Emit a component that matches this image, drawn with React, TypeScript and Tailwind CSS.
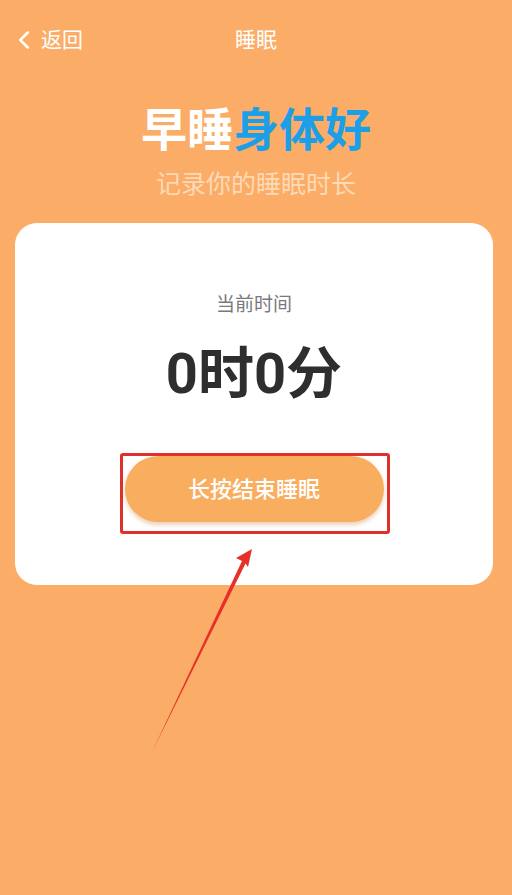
import { ChevronLeft } from "lucide-react";

export default function App() {
  return (
    <div
      className="relative w-[512px] h-[895px] overflow-hidden bg-[#fbad67]"
      style={{ fontFamily: "Roboto, 'Noto Sans CJK SC', sans-serif" }}
    >
      {/* header */}
      <div className="relative flex h-[80px] items-center justify-center">
        <div className="absolute left-[9px] top-0 flex h-full items-center gap-[2px] text-white">
          <ChevronLeft className="h-[30px] w-[30px]" strokeWidth={2} />
          <span className="text-[21px] leading-none">返回</span>
        </div>
        <span className="text-[21px] leading-none text-white">睡眠</span>
      </div>

      {/* slogan */}
      <div className="flex flex-col items-center">
        <h1 className="mt-[23px] text-[46px] font-bold leading-[54px]">
          <span className="text-white">早睡</span>
          <span className="text-[#1c9fe6]">身体好</span>
        </h1>
        <p className="mt-[14px] text-[25px] leading-[28px] text-[#fdd9b6]">记录你的睡眠时长</p>
      </div>

      {/* card */}
      <div className="ml-[15px] mt-[24px] flex h-[362px] w-[478px] flex-col items-center rounded-[22px] bg-white">
        <p className="mt-[70px] text-[19px] leading-[24px] text-[#7a7a7a]">当前时间</p>
        <p className="mt-[29px] text-[56px] font-bold leading-[56px] text-[#2e2e2e]">0时0分</p>
        <button className="mt-[54px] flex h-[66px] w-[259px] items-center justify-center rounded-full bg-[#f9ae5f] text-[22px] font-medium text-white shadow-[0_3px_4px_rgba(200,120,60,0.35)]">
          长按结束睡眠
        </button>
      </div>

      {/* annotation box */}
      <div className="absolute left-[120px] top-[453px] h-[81px] w-[270px] rounded-[3px] border-[3px] border-[#e1302c]" />

      {/* annotation arrow */}
      <svg className="absolute left-0 top-0" width="512" height="895" viewBox="0 0 512 895">
        <polygon
          points="252,549 236,558 242,561 152,752 245.5,563.5 248,567"
          fill="#e8302a"
        />
      </svg>
    </div>
  );
}
